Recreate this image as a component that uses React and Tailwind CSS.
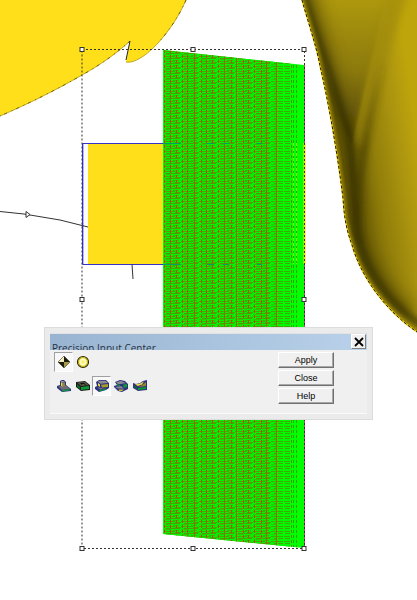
import React, { useState } from 'react';

const HANDLES = [
  [82, 49], [193, 49], [304, 49],
  [82, 299], [304, 299],
  [82, 548], [193, 548], [304, 548],
];

// Red grid columns of the hatched solid, [x, solid]
const COLUMNS = [
  [164, false], [170, false], [176, false], [182, false], [187, false], [194, true],
  [201, false], [206, false], [212, false], [218, false], [224, true], [231, false],
  [236, true], [243, false], [248, false], [254, false], [261, false], [266, true], [276, true],
];

const VASE_EDGE = 'M302 0C308 22 317 48 320 66C328 100 337 150 343 198C344 215 346 229 352 245C360 274 383 309 417 332';

const Leaf = () => (
  <g>
    <path d="M0 0H186C180 14 170 30 158 43C151 51 136 64 126 62L130 41C118 52 102 64 82 75C58 89 28 104 0 116Z" fill="#ffdf1a" />
    <path d="M186 0C180 14 170 30 158 43C151 51 136 64 126 62M130 41C118 52 102 64 82 75C58 89 28 104 0 116" fill="none" stroke="#b09400" strokeWidth="0.8" />
    <path d="M186 0C180 14 170 30 158 43M130 41C118 52 102 64 82 75C58 89 28 104 0 116" fill="none" stroke="#5a4b00" strokeWidth="0.8" strokeDasharray="3 4 1 5" />
    <path d="M130 41L126 60" fill="none" stroke="#222" strokeWidth="1" />
  </g>
);

const Vase = () => (
  <g>
    <defs>
      <linearGradient id="vaseBody" gradientUnits="userSpaceOnUse" x1="340" y1="140" x2="417" y2="128">
        <stop offset="0" stopColor="#6b5d04" />
        <stop offset="0.4" stopColor="#917e0a" />
        <stop offset="0.75" stopColor="#ad960f" />
        <stop offset="1" stopColor="#bea50b" />
      </linearGradient>
      <linearGradient id="vaseFacet" x1="0" y1="0" x2="0" y2="1">
        <stop offset="0" stopColor="#b09a0b" />
        <stop offset="0.5" stopColor="#8c7a0b" />
        <stop offset="1" stopColor="#4a4004" />
      </linearGradient>
      <linearGradient id="vaseCrease" gradientUnits="userSpaceOnUse" x1="0" y1="60" x2="0" y2="240">
        <stop offset="0" stopColor="#3a3200" stopOpacity="0" />
        <stop offset="0.5" stopColor="#3a3200" stopOpacity="0.6" />
        <stop offset="1" stopColor="#3a3200" stopOpacity="0.3" />
      </linearGradient>
      <clipPath id="vaseClip">
        <path d={`${VASE_EDGE}V0Z`} />
      </clipPath>
      <filter id="soft1" filterUnits="userSpaceOnUse" x="260" y="-40" width="200" height="420">
        <feGaussianBlur stdDeviation="1" />
      </filter>
      <filter id="soft3" filterUnits="userSpaceOnUse" x="260" y="-40" width="200" height="420">
        <feGaussianBlur stdDeviation="3" />
      </filter>
      <filter id="soft7" filterUnits="userSpaceOnUse" x="260" y="-40" width="200" height="420">
        <feGaussianBlur stdDeviation="7" />
      </filter>
    </defs>
    <g clipPath="url(#vaseClip)">
      <rect x="296" y="0" width="121" height="340" fill="url(#vaseBody)" />
      <path d="M296 -5H386L352 145Z" fill="url(#vaseFacet)" filter="url(#soft1)" />
      <path d="M386 -5L352 142L364 148C376 104 390 44 408 -5Z" fill="#9c880b" opacity="0.6" filter="url(#soft3)" />
      <path d="M308 -10L347 142L358 205C357 245 370 275 410 315" fill="none" stroke="#4a4000" strokeWidth="18" opacity="0.5" filter="url(#soft7)" />
      <path d="M300 -20C322 55 342 105 349 140C354 170 354 205 357 230C364 268 388 304 425 328" fill="none" stroke="#2c2600" strokeWidth="7" opacity="0.7" filter="url(#soft3)" />
      <path d="M384 60C364 130 358 180 357 240" fill="none" stroke="url(#vaseCrease)" strokeWidth="8" filter="url(#soft3)" />
      <path d={VASE_EDGE} fill="none" stroke="#a08c08" strokeWidth="6" opacity="0.6" filter="url(#soft1)" />
    </g>
    <path d={VASE_EDGE} fill="none" stroke="#f0cf10" strokeWidth="1.4" />
    <path d={VASE_EDGE} fill="none" stroke="#221c00" strokeWidth="1" strokeDasharray="3 2" />
  </g>
);

const Hatch = () => (
  <g>
    <defs>
      <pattern id="rows" patternUnits="userSpaceOnUse" x="163" y="50" width="18" height="5">
        <rect width="18" height="5" fill="#00f600" />
        <rect y="1" width="12" height="1" fill="#44a800" />
        <rect x="12" y="2" width="6" height="1" fill="#44a800" />
        <rect x="3" y="3" width="14" height="1" fill="#4f9c00" />
        <rect x="0" y="4" width="8" height="1" fill="#2fc400" />
        <rect x="10" y="0" width="6" height="1" fill="#36b800" />
      </pattern>
      <pattern id="sparseRows" patternUnits="userSpaceOnUse" x="277" y="50" width="7" height="5">
        <rect width="7" height="5" fill="#00fa00" />
        <rect y="1" width="6" height="1" fill="#3cab00" />
        <rect x="1" y="3" width="5" height="1" fill="#3cab00" />
      </pattern>
      <clipPath id="slab">
        <path d="M163 50L304 65V548L163 534Z" />
      </clipPath>
    </defs>
    <g clipPath="url(#slab)">
      <rect x="163" y="50" width="141" height="500" fill="#00ff00" />
      <rect x="164" y="50" width="113" height="500" fill="url(#rows)" />
      <rect x="277" y="50" width="13" height="500" fill="url(#sparseRows)" />
      {COLUMNS.map(([x, solid]) => (
        <line
          key={x}
          x1={x + 0.5}
          x2={x + 0.5}
          y1="50"
          y2="550"
          stroke={solid ? '#a86000' : '#c24a00'}
          strokeWidth="1"
          strokeDasharray={solid ? 'none' : '3 2'}
        />
      ))}
      {[291, 293, 296].map((x) => (
        <g key={x} strokeWidth="1" strokeDasharray="3 2">
          <line x1={x + 0.5} x2={x + 0.5} y1="50" y2="550" stroke="#409c00" />
          {x > 291 && <line x1={x + 0.5} x2={x + 0.5} y1="143" y2="264" stroke="#98f000" />}
        </g>
      ))}
      <path d="M163 143.5H181M207 143.5H214M223 143.5H229M257 143.5H262M163 264.5H181M207 264.5H214M223 264.5H229M257 264.5H262" stroke="#00a060" strokeWidth="1" />
    </g>
    <path d="M304.5 65V143M304.5 264V548" stroke="#d04060" strokeWidth="1" />
    <path d="M304.5 143V264" stroke="#ffd800" strokeWidth="2" />
  </g>
);

const Canvas = () => (
  <svg viewBox="0 0 417 600" className="block w-full h-auto" role="img" aria-label="Design canvas">
    <Leaf />
    <Vase />
    <rect x="88" y="143" width="76" height="121" fill="#ffdf1a" />
    <path d="M163 143.5H82.5V264.5H163" fill="none" stroke="#3333c8" strokeWidth="1" />
    <path d="M83.5 144V264" stroke="#b4b4ff" strokeWidth="1" />
    <path d="M0 211.5L24 214L60 220L88 227M132 264.5L133 279" fill="none" stroke="#333" strokeWidth="1" />
    <path d="M26 211.5V217.5L30 214.5Z" fill="#fff" stroke="#333" strokeWidth="1" />
    <Hatch />
    <rect x="82" y="49.5" width="222.5" height="499" fill="none" stroke="#333" strokeWidth="1" strokeDasharray="2 2" />
    {HANDLES.map(([x, y]) => (
      <rect key={`${x}-${y}`} x={x - 2} y={y - 1.5} width="4" height="4" fill="#fff" stroke="#333" strokeWidth="1" />
    ))}
  </svg>
);

const DiamondIcon = () => (
  <svg viewBox="0 0 14 14" className="w-3.5 h-3.5">
    <path d="M7 1V7H1Z" fill="#f3eec0" />
    <path d="M7 1L13 7H7Z" fill="#1c1a08" />
    <path d="M1 7H7V13Z" fill="#1c1a08" />
    <path d="M7 7H13L7 13Z" fill="#a39a4a" />
    <path d="M7 1L13 7L7 13L1 7Z" fill="none" stroke="#3a371c" strokeWidth="0.6" />
  </svg>
);

const RingIcon = () => (
  <svg viewBox="0 0 14 14" className="w-3.5 h-3.5">
    <circle cx="7" cy="7" r="5.5" fill="#fff67a" stroke="#2b2800" strokeWidth="1.2" />
    <circle cx="7" cy="7" r="4.5" fill="none" stroke="#b8ab20" strokeWidth="1" />
    <circle cx="7" cy="7" r="2.5" fill="#fff36a" stroke="#fff" strokeWidth="1" />
  </svg>
);

const AddIcon = () => (
  <svg viewBox="0 0 14 12" className="w-3.5 h-3">
    <path d="M0 6L3 5V1L5 0H7L9 2V5L14 9V11L5 12L0 8Z" fill="#2e3180" />
    <path d="M1 6.5L9 5.5L13 9L5 10Z" fill="#6d6d78" />
    <path d="M5 10L13 9.3V10.6L5 11.6Z" fill="#0a9a35" />
    <path d="M3.5 1.5L5 0.8L7 1.2L8 2L6 2.6Z" fill="#9a9a9a" />
    <path d="M6 2.8L8 2.2V6.4L6 7Z" fill="#8e8530" />
    <path d="M4 2.2L5.6 2.8V6.6L4 6Z" fill="#e8da3e" />
  </svg>
);

const SubtractIcon = () => (
  <svg viewBox="0 0 14 12" className="w-3.5 h-3">
    <path d="M0 2L9 1L14 5V10L5 11L0 7Z" fill="#1c1c1c" />
    <path d="M1 2.5L9 2L13 5L5 6Z" fill="#55554a" />
    <path d="M4 3L8 3L10 5L6 5Z" fill="#111" />
    <path d="M6 4.5H9L7 5.2Z" fill="#d8cb30" />
    <path d="M5 7L13 6V9L5 10Z" fill="#0a9a35" />
    <path d="M1 4L4 6.5V9L1 7Z" fill="#0a6a28" />
  </svg>
);

const MergeHighIcon = () => (
  <svg viewBox="0 0 14 12" className="w-3.5 h-3">
    <path d="M1 2L4 0H11L14 3V8L11 10L4 12L0 9V7L2 6Z" fill="#2e3180" />
    <path d="M2.5 1.6L5 0.8H10.5L13 3L5.5 3.8Z" fill="#8c8c8c" />
    <path d="M6 4.8L13 4V7L7 7.6Z" fill="#a89c28" />
    <path d="M3 3L5 4.6V7L3 5.6Z" fill="#f0e04a" />
    <path d="M2 7L8 8.4L12 8L5 9.4Z" fill="#777783" />
    <path d="M4.5 10L11 8.8V9.8L4.5 11.4Z" fill="#0a9a35" />
  </svg>
);

const MergeLowIcon = () => (
  <svg viewBox="0 0 14 12" className="w-3.5 h-3">
    <path d="M1 2L6 0L11 1L14 4V9L8 12L4 11L0 7V6L3 5Z" fill="#2e3180" />
    <path d="M2 2L7 1L12 3L7 4H4Z" fill="#8c8c8c" />
    <path d="M9 4.6L13 4V7L10 8Z" fill="#0a9a35" />
    <path d="M3 4L6 5V6L3 5.4Z" fill="#0a9a35" />
    <path d="M1 7L7 6L10 8.6H4Z" fill="#85858c" />
    <path d="M4.5 9.5H10L8 11H5Z" fill="#c9bc30" />
  </svg>
);

const ReplaceIcon = () => (
  <svg viewBox="0 0 14 12" className="w-3.5 h-3">
    <path d="M0 3L3 4L7 3L10 1L14 0V10L5 11L0 8Z" fill="#2e3180" />
    <path d="M2 4.6L7 3.6L11 1.4L9 4.4L5 6Z" fill="#e8da3e" />
    <path d="M9 5L13 2V6L6 7Z" fill="#8e8530" />
    <path d="M5 8L13 7V9L5 10Z" fill="#0a9a35" />
    <path d="M1 5.4L4 7.4V9.4L1 7.6Z" fill="#0a6a28" />
  </svg>
);

const SHAPES = [
  { id: 'angle', label: 'Angle', Icon: DiamondIcon },
  { id: 'round', label: 'Round', Icon: RingIcon },
];

const MODES = [
  { id: 'add', label: 'Add', Icon: AddIcon },
  { id: 'subtract', label: 'Subtract', Icon: SubtractIcon },
  { id: 'mergeHigh', label: 'Merge high', Icon: MergeHighIcon },
  { id: 'mergeLow', label: 'Merge low', Icon: MergeLowIcon },
  { id: 'replace', label: 'Replace', Icon: ReplaceIcon },
];

const ToolRow = ({ items, value, onChange }) => (
  <div className="flex">
    {items.map(({ id, label, Icon }) => (
      <button
        key={id}
        type="button"
        aria-label={label}
        aria-pressed={value === id}
        onClick={() => onChange(id)}
        className={`flex w-[19px] h-5 items-center justify-center border ${
          value === id
            ? 'bg-[#f8f8f8] border-t-[#a0a0a0] border-l-[#a0a0a0] border-r-white border-b-white'
            : 'border-transparent'
        }`}
      >
        <Icon />
      </button>
    ))}
  </div>
);

const PrecisionDialog = () => {
  const [shape, setShape] = useState('angle');
  const [mode, setMode] = useState('mergeHigh');

  return (
    <section
      role="dialog"
      aria-labelledby="dialog-title"
      className="absolute inset-x-11 top-[327px] p-[5px] bg-[#ebebeb] border border-[#dcdcdc]"
    >
      <div className="bg-[#f0f0f0] border-t border-b border-t-[#e2e2e2] border-b-[#fafafa]">
        <header className="flex h-4 justify-between overflow-hidden pr-px bg-linear-to-r from-[#99b4d1] to-[#b9d1ea]">
          <h1 id="dialog-title" className="pl-0.5 pt-1.5 text-[10px] leading-4 text-[#26323f] whitespace-nowrap font-['Open_Sans','Noto_Sans',sans-serif]">
            Precision Input Center
          </h1>
          <button
            type="button"
            aria-label="Close window"
            className="flex w-[15px] h-[15px] items-center justify-center bg-[#f0f0f0] border border-t-white border-l-white border-r-[#808080] border-b-[#808080]"
          >
            <svg viewBox="0 0 10 10" className="w-2.5 h-2.5">
              <path d="M1 1L9 9M9 1L1 9" stroke="#000" strokeWidth="1.8" />
            </svg>
          </button>
        </header>

        <div className="flex justify-between pt-0.5 pb-[9px] pl-1 pr-[33px]">
          <div className="flex flex-col gap-1">
            <ToolRow items={SHAPES} value={shape} onChange={setShape} />
            <ToolRow items={MODES} value={mode} onChange={setMode} />
          </div>

          <div className="flex flex-col gap-0.5">
            {['Apply', 'Close', 'Help'].map((label) => (
              <button
                key={label}
                type="button"
                className="w-14 h-4 text-[9px] leading-3 text-black bg-[#f0f0f0] border border-t-white border-l-white border-r-[#707070] border-b-[#707070] shadow-[inset_-1px_-1px_0_#a8a8a8]"
              >
                {label}
              </button>
            ))}
          </div>
        </div>
      </div>
    </section>
  );
};

const App = () => (
  <main className="relative min-h-screen overflow-hidden bg-white font-['Liberation_Sans',Arial,sans-serif]">
    <Canvas />
    <PrecisionDialog />
  </main>
);

export default App;
